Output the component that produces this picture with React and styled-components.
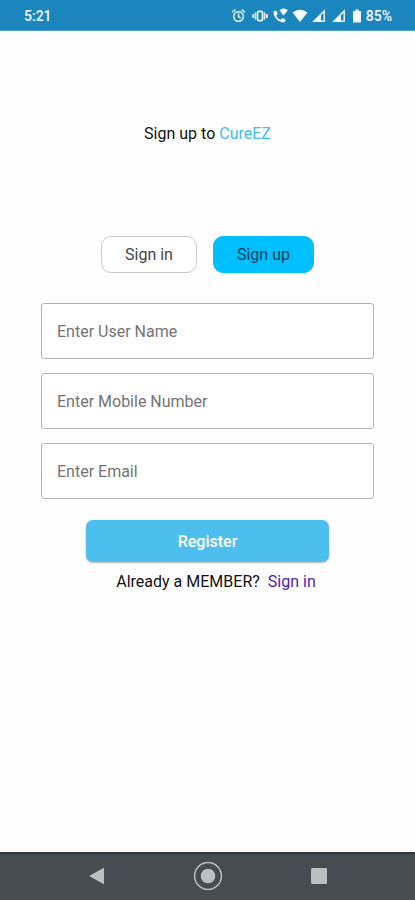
import React, { useState } from "react";
import styled, { createGlobalStyle } from "styled-components";

const GlobalStyle = createGlobalStyle`
  *, *::before, *::after { box-sizing: border-box; }
  body {
    margin: 0;
    background: #fefefe;
    color: #111;
    font-family: Roboto, "Liberation Sans", sans-serif;
    font-size: 16px;
    line-height: 20px;
  }
  button, input { font: inherit; }
`;

const Screen = styled.div`
  display: flex;
  flex-direction: column;
  min-height: 100vh;
`;

const StatusBar = styled.header`
  display: flex;
  align-items: center;
  justify-content: space-between;
  height: 31px;
  padding: 2px 23px 0 24px;
  background: #1b86be;
  border-bottom: 1px solid #4d9fcb;
  color: #f2faff;
  font-size: 14px;
  font-weight: 500;
`;

const StatusIcons = styled.div`
  display: flex;
  align-items: center;
  gap: 4px;

  svg { display: block; }
`;

const Main = styled.main`
  display: flex;
  flex: 1;
  flex-direction: column;
  align-items: center;
  padding: 93px 41px 24px;
`;

const Title = styled.h1`
  margin: 0;
  font-size: 16px;
  font-weight: 400;
`;

const Brand = styled.span`
  color: #43b9ef;
`;

const Tabs = styled.div`
  display: flex;
  gap: 16px;
  margin-top: 92px;
`;

const TabButton = styled.button`
  height: 37px;
  padding: 1px 23px 0;
  border: 1px solid ${(p) => (p.$active ? "#00bfff" : "#c9c9c9")};
  border-radius: 10px;
  background: ${(p) => (p.$active ? "#00bfff" : "#fff")};
  color: ${(p) => (p.$active ? "#153f50" : "#444")};
  cursor: pointer;
`;

const Form = styled.form`
  display: flex;
  flex-direction: column;
  gap: 14px;
  width: 100%;
  margin-top: 30px;
`;

const Field = styled.input`
  width: 100%;
  height: 56px;
  padding: 0 15px;
  border: 1px solid #b2b2b2;
  border-radius: 3px;
  background: #fff;
  color: #222;

  &::placeholder {
    color: #737373;
    opacity: 1;
  }
`;

const RegisterButton = styled.button`
  height: 42px;
  margin: 7px 45px 0;
  padding: 2px 0 0;
  border: 0;
  border-radius: 7px;
  background: #4dbfef;
  box-shadow: 0 1px 2px rgba(0, 0, 0, 0.3);
  color: #fff;
  font-weight: 500;
  cursor: pointer;
`;

const Prompt = styled.p`
  display: flex;
  gap: 8px;
  margin: 10px 0 0;
  padding-left: 17px;
`;

const SignInLink = styled.a`
  color: #5219b0;
  text-decoration: none;
`;

const NavBar = styled.nav`
  display: flex;
  align-items: center;
  justify-content: center;
  gap: 63px;
  height: 48px;
  background: #454d53;
  box-shadow: inset 0 2px 0 #303a3e;
`;

const NavButton = styled.button`
  display: grid;
  place-items: center;
  width: 48px;
  height: 40px;
  padding: 0;
  border: 0;
  background: transparent;
  color: #b9c0c2;
  cursor: pointer;
`;

const AlarmIcon = () => (
  <svg width="16" height="16" viewBox="0 0 16 16" fill="none" stroke="currentColor" strokeWidth="1.4" aria-hidden="true">
    <circle cx="7.5" cy="8.5" r="4.8" />
    <path d="M1.2 4.2 4.3 1.6M13.8 4.2l-3.1-2.6M7.5 5.6v3.1l2.2 1.4" />
  </svg>
);

const VibrateIcon = () => (
  <svg width="18" height="16" viewBox="0 0 18 16" fill="none" stroke="currentColor" aria-hidden="true">
    <rect x="6.5" y="3.4" width="5" height="9.2" rx="1.4" strokeWidth="1.6" />
    <path d="M4.5 4.6v6.8M13.5 4.6v6.8" strokeWidth="1.6" />
    <path d="M2.2 6.1v3.8M15.8 6.1v3.8" strokeWidth="1.6" />
  </svg>
);

const WifiCallIcon = () => (
  <svg width="15" height="16" viewBox="0 0 15 16" fill="currentColor" aria-hidden="true">
    <path d="M6.4 2.2a6.2 6.2 0 0 1 8.4 0l-4.2 5.2z" />
    <path d="M1.4 3h2.5l.8 3.2-1.6 1.6a10 10 0 0 0 4.2 4.1l1.6-1.6 3.3.8v2.4c0 .5-.3.8-.8.8C5.4 14.3.6 9.7.6 3.9c0-.5.3-.9.8-.9z" />
  </svg>
);

const WifiIcon = () => (
  <svg width="16" height="16" viewBox="0 0 16 16" fill="currentColor" aria-hidden="true">
    <path d="M.6 4.7C4.8.8 11.2.8 15.4 4.7L8 14z" />
  </svg>
);

const SignalIcon = () => (
  <svg width="16" height="16" viewBox="0 0 16 16" aria-hidden="true">
    <path d="M1.9 13.3H12.2V2.9z" fill="none" stroke="currentColor" strokeWidth="1.4" />
    <path d="M1.2 14H9V6.2z" fill="currentColor" />
  </svg>
);

const BatteryIcon = () => (
  <svg width="10" height="16" viewBox="0 0 10 16" fill="currentColor" aria-hidden="true">
    <path d="M3.3 1.5h3.4V3h1.5c.5 0 .8.3.8.8v9.9c0 .5-.3.8-.8.8H1.8c-.5 0-.8-.3-.8-.8V3.8c0-.5.3-.8.8-.8h1.5z" />
  </svg>
);

const BackIcon = () => (
  <svg width="16" height="18" viewBox="0 0 16 18" fill="currentColor" aria-hidden="true">
    <path d="M0 9 15 .7v16.6z" />
  </svg>
);

const HomeIcon = () => (
  <svg width="30" height="30" viewBox="0 0 30 30" aria-hidden="true">
    <circle cx="15" cy="15" r="13.4" fill="none" stroke="currentColor" strokeWidth="1.5" />
    <circle cx="15" cy="15" r="7.3" fill="currentColor" />
  </svg>
);

const RecentIcon = () => (
  <svg width="16" height="16" viewBox="0 0 16 16" fill="currentColor" aria-hidden="true">
    <rect width="16" height="16" rx="1" />
  </svg>
);

const fields = [
  { name: "username", type: "text", label: "Enter User Name" },
  { name: "mobile", type: "tel", label: "Enter Mobile Number" },
  { name: "email", type: "email", label: "Enter Email" },
];

export default function App() {
  const [mode, setMode] = useState("up");

  return (
    <>
      <GlobalStyle />
      <Screen>
        <StatusBar>
          <span>5:21</span>
          <StatusIcons>
            <AlarmIcon />
            <VibrateIcon />
            <WifiCallIcon />
            <WifiIcon />
            <SignalIcon />
            <SignalIcon />
            <BatteryIcon />
            <span>85%</span>
          </StatusIcons>
        </StatusBar>
        <Main>
          <Title>
            Sign up to <Brand>CureEZ</Brand>
          </Title>
          <Tabs>
            <TabButton type="button" $active={mode === "in"} aria-pressed={mode === "in"} onClick={() => setMode("in")}>
              Sign in
            </TabButton>
            <TabButton type="button" $active={mode === "up"} aria-pressed={mode === "up"} onClick={() => setMode("up")}>
              Sign up
            </TabButton>
          </Tabs>
          <Form onSubmit={(e) => e.preventDefault()}>
            {fields.map((f) => (
              <Field key={f.name} name={f.name} type={f.type} placeholder={f.label} aria-label={f.label} />
            ))}
            <RegisterButton type="submit">Register</RegisterButton>
          </Form>
          <Prompt>
            Already a MEMBER? <SignInLink href="#sign-in">Sign in</SignInLink>
          </Prompt>
        </Main>
        <NavBar aria-label="System">
          <NavButton type="button" aria-label="Back"><BackIcon /></NavButton>
          <NavButton type="button" aria-label="Home"><HomeIcon /></NavButton>
          <NavButton type="button" aria-label="Recent apps"><RecentIcon /></NavButton>
        </NavBar>
      </Screen>
    </>
  );
}
